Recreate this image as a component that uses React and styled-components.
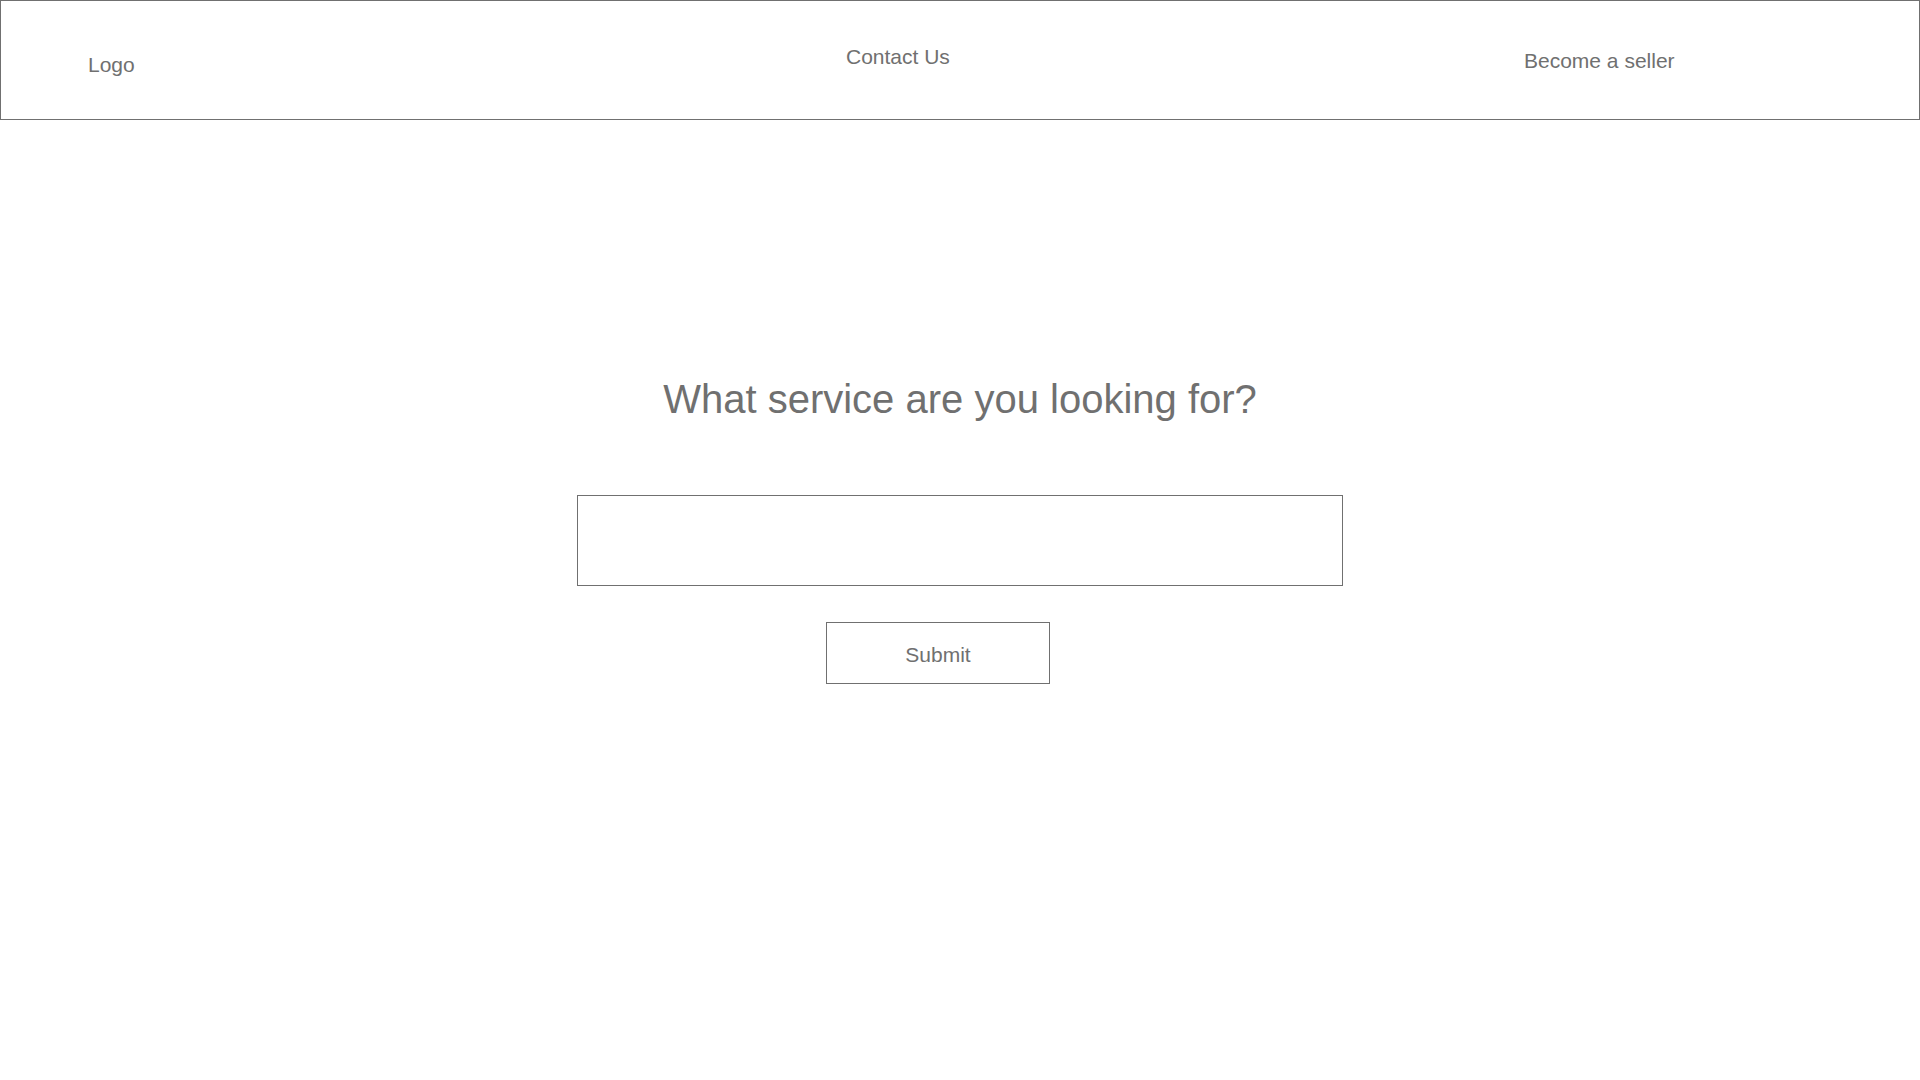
import React from "react";
import styled, { createGlobalStyle } from "styled-components";

const GlobalStyle = createGlobalStyle`
  html, body {
    margin: 0;
    padding: 0;
    background: #fff;
  }
  body {
    font-family: "Liberation Sans", Arial, Helvetica, sans-serif;
    color: #707070;
  }
`;

export default function App() {
  return (
    <>
      <GlobalStyle />
      <Header>
        <NavItem $top={53}>Logo</NavItem>
        <NavItem $top={45}>Contact Us</NavItem>
        <NavItem $top={49}>Become a seller</NavItem>
      </Header>

      <Main>
        <Title>What service are you looking for?</Title>
        <SearchInput type="text" />
        <SubmitButton type="button">Submit</SubmitButton>
      </Main>
    </>
  );
}

const Header = styled.header`
  box-sizing: border-box;
  width: 1920px;
  height: 120px;
  border: 1px solid #707070;
  padding-left: 87px;
  display: grid;
  grid-template-columns: 758px 678px 1fr;
  align-items: start;
`;

const NavItem = styled.div`
  margin-top: ${(p) => p.$top - 1}px;
  font-size: 21px;
  line-height: 24px;
  color: #707070;
`;

const Main = styled.main`
  display: flex;
  flex-direction: column;
  align-items: center;
  padding-top: 256px;
`;

const Title = styled.h1`
  margin: 0;
  font-size: 40px;
  font-weight: 400;
  line-height: 46px;
  color: #707070;
`;

const SearchInput = styled.input`
  box-sizing: border-box;
  margin-top: 73px;
  width: 766px;
  height: 91px;
  border: 1px solid #707070;
  border-radius: 0;
  background: #fff;
  outline: none;
  padding: 0 20px;
  font-family: inherit;
  font-size: 21px;
  color: #707070;
`;

const SubmitButton = styled.button`
  box-sizing: border-box;
  margin-top: 36px;
  margin-right: 44px;
  width: 224px;
  height: 62px;
  border: 1px solid #707070;
  border-radius: 0;
  background: #fff;
  font-family: inherit;
  font-size: 21px;
  line-height: 24px;
  padding: 4px 0 0;
  color: #707070;
  cursor: pointer;
`;
